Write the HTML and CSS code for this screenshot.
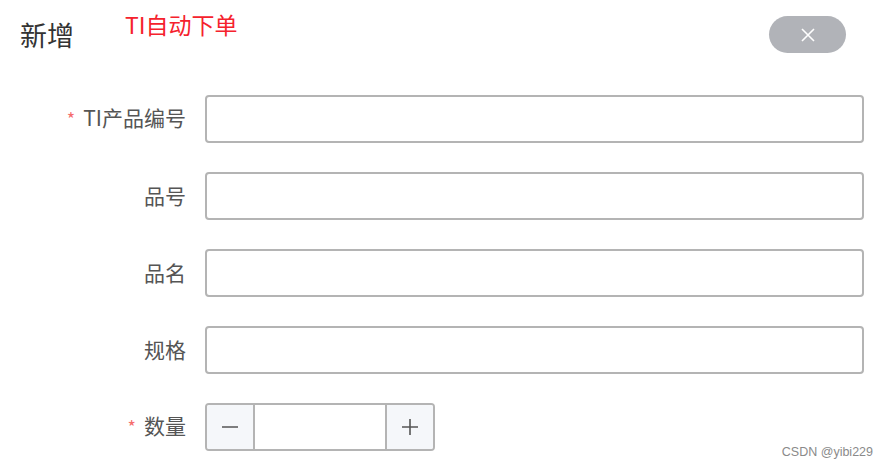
FILE: index.html
```html
<!DOCTYPE html>
<html lang="zh">
<head>
<meta charset="utf-8">
<link rel="stylesheet" href="styles.css">
</head>
<body>
<div class="dialog">
  <div class="header">
    <div class="title">新增</div>
    <div class="note">TI自动下单</div>
    <button class="close" aria-label="close">
      <svg width="16" height="16" viewBox="0 0 16 16"><path d="M2 2 L14 14 M14 2 L2 14" stroke="#fff" stroke-width="1.6" fill="none"/></svg>
    </button>
  </div>
  <form class="form">
    <label class="label"><span class="req">*</span>TI产品编号</label>
    <input class="input" type="text">
    <label class="label">品号</label>
    <input class="input" type="text">
    <label class="label">品名</label>
    <input class="input" type="text">
    <label class="label">规格</label>
    <input class="input" type="text">
    <label class="label"><span class="req">*</span>数量</label>
    <div class="number">
      <span class="btn minus"><svg width="18" height="18" viewBox="0 0 18 18"><path d="M1 9 H17" stroke="#555" stroke-width="1.6"/></svg></span>
      <input class="num-input" type="text">
      <span class="btn plus"><svg width="18" height="18" viewBox="0 0 18 18"><path d="M1 9 H17 M9 1 V17" stroke="#555" stroke-width="1.6"/></svg></span>
    </div>
  </form>
  <div class="watermark">CSDN @yibi229</div>
</div>
</body>
</html>
```
FILE: styles.css
```css
* { box-sizing: border-box; }
html, body { margin: 0; padding: 0; background: #fff; }
body {
  width: 888px;
  height: 470px;
  overflow: hidden;
  font-family: "Noto Sans", "Noto Sans CJK SC", sans-serif;
}
.dialog {
  position: relative;
  width: 888px;
  height: 470px;
}
.header {
  display: flex;
  align-items: flex-start;
  height: 95px;
  padding: 16px 42px 0 20px;
}
.title {
  font-size: 27px;
  line-height: 38px;
  color: #333;
  font-family: "Noto Sans CJK SC", sans-serif;
}
.note {
  margin-left: 51px;
  margin-top: -7px;
  font-size: 23px;
  line-height: 30px;
  color: #f5222d;
  font-family: "Noto Sans CJK SC", sans-serif;
}
.close {
  margin-left: auto;
  width: 77px;
  height: 37px;
  border: none;
  border-radius: 19px;
  background: #b1b3b8;
  display: flex;
  align-items: center;
  justify-content: center;
  padding: 0;
}
.form {
  display: grid;
  grid-template-columns: 186px 659px;
  column-gap: 19px;
  row-gap: 29px;
  align-items: center;
}
.label {
  text-align: right;
  font-size: 21px;
  line-height: 28px;
  padding-bottom: 3px;
  color: #555;
  font-family: "Noto Sans CJK SC", sans-serif;
}
.req {
  color: #f56c6c;
  font-size: 18px;
  margin-right: 8px;
}
.input {
  height: 48px;
  width: 659px;
  border: 2px solid #b4b4b4;
  border-radius: 4px;
  background: #fff;
  outline: none;
}
.number {
  display: flex;
  width: 230px;
  height: 48px;
  border: 2px solid #b4b4b4;
  border-radius: 4px;
  overflow: hidden;
}
.btn {
  width: 48px;
  flex: none;
  background: #f5f7fa;
  display: flex;
  align-items: center;
  justify-content: center;
}
.minus { border-right: 2px solid #b4b4b4; }
.plus { border-left: 2px solid #b4b4b4; }
.num-input {
  flex: 1;
  min-width: 0;
  border: none;
  outline: none;
  background: #fff;
}
.watermark {
  position: absolute;
  right: 15px;
  bottom: 11px;
  font-size: 12.5px;
  color: #8a8a8a;
  font-family: "Liberation Sans", sans-serif;
}
```
